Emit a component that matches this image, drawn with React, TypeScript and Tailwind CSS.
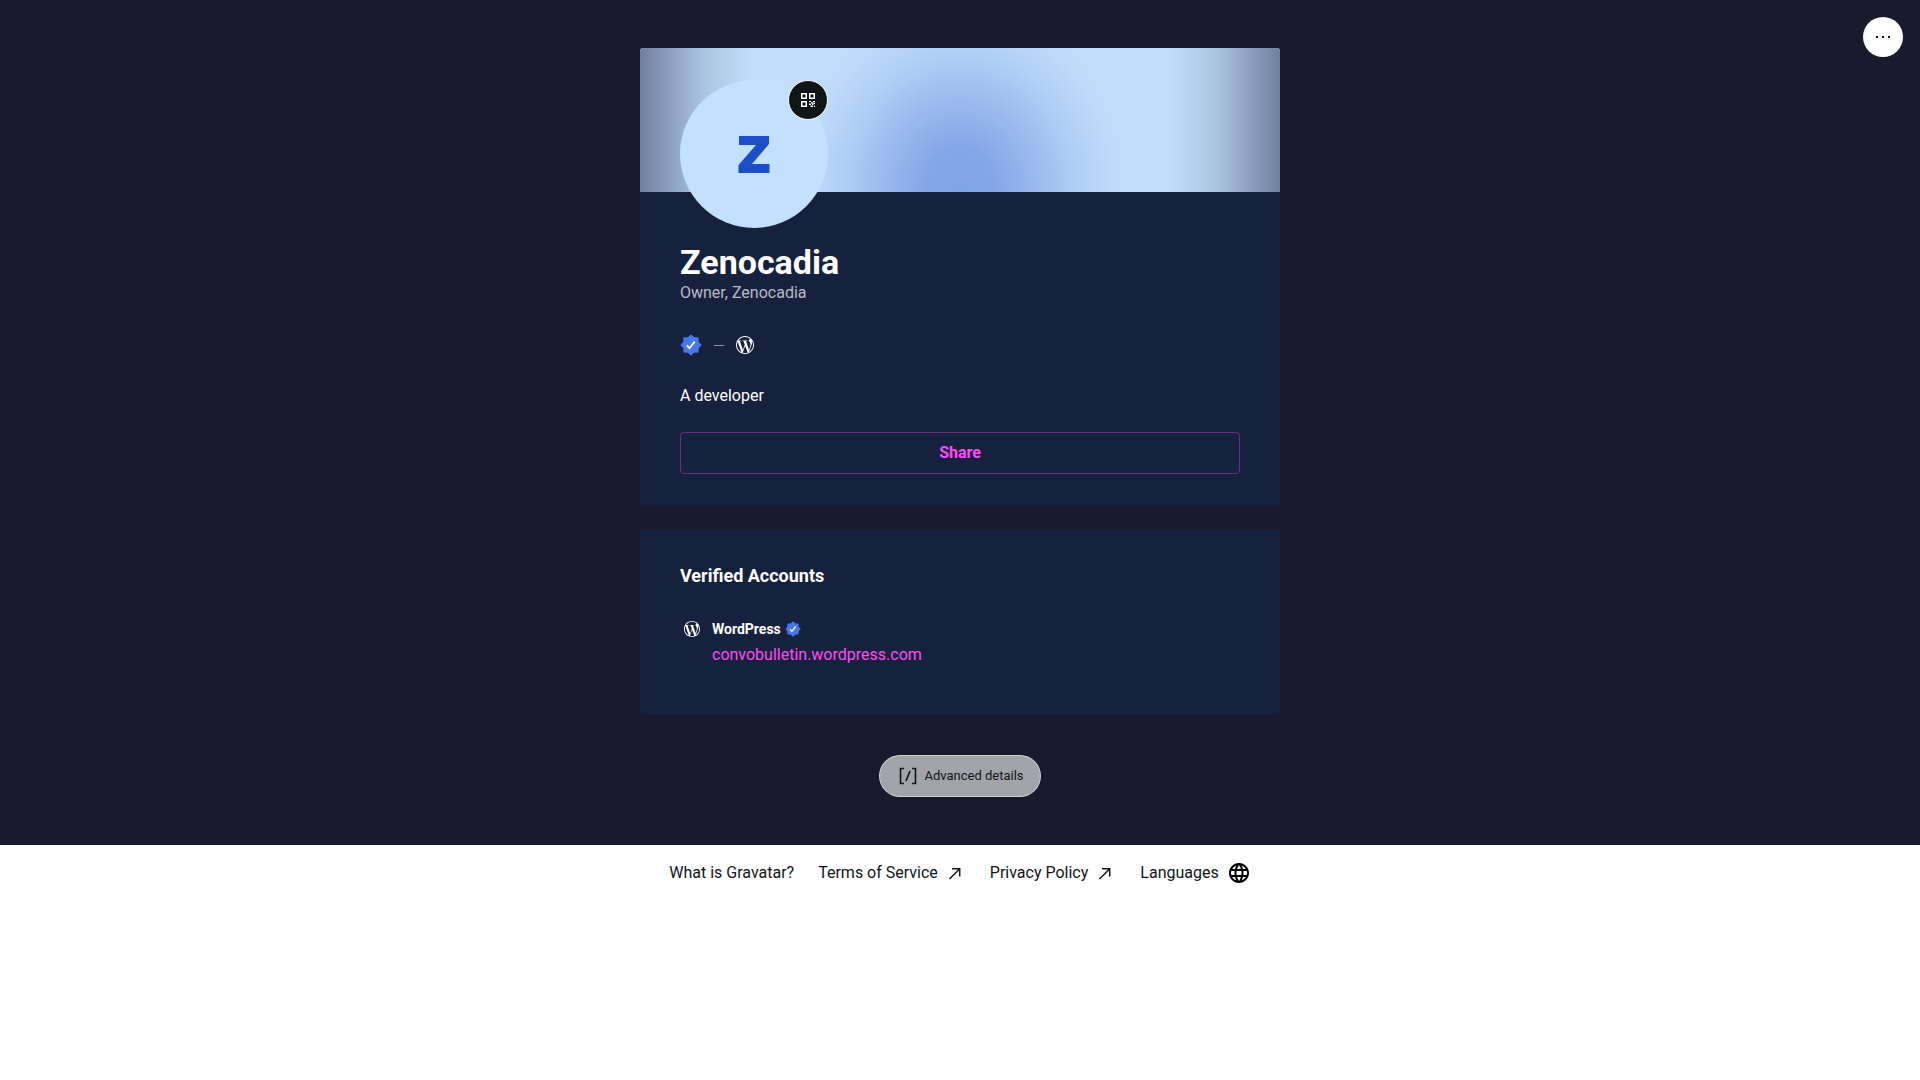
import type { ReactNode } from "react";
import { MdLanguage } from "react-icons/md";
import { SiWordpress } from "react-icons/si";

const footerLinks = [
  { label: "What is Gravatar?", external: false },
  { label: "Terms of Service", external: true },
  { label: "Privacy Policy", external: true },
];

function VerifiedBadge({ className }: { className: string }) {
  return (
    <svg viewBox="0 0 20 20" className={className} aria-label="Verified">
      <g fill="#4678eb">
        <rect x="3" y="3" width="14" height="14" rx="1" />
        <rect x="3" y="3" width="14" height="14" rx="1" transform="rotate(45 10 10)" />
      </g>
      <path d="M6.2 10.4l2.4 2.5 4.8-6" fill="none" stroke="#fff" strokeWidth="1.6" />
    </svg>
  );
}

function QrIcon() {
  return (
    <svg viewBox="0 0 14 14" className="size-3.5" fill="#fff">
      <path
        fillRule="evenodd"
        d="M0 0h6v6H0zM1.5 1.5v3h3v-3zM8 0h6v6H8zM9.5 1.5v3h3v-3zM0 8h6v6H0zM1.5 9.5v3h3v-3z"
      />
      <path d="M8 8h2v1H8zM10 9h1.500v1.500H10zM12 8h2v1.500h-2zM8 10.500h2V12H8zM11 10.500h1.500V12H11zM12.500 10H14v1h-1.500zM9.500 12.500H12V14H9.500zM13 12.500h1V14h-1z" />
    </svg>
  );
}

function ExternalArrow() {
  return (
    <svg viewBox="0 0 20 20" className="size-5" fill="none" stroke="currentColor" strokeWidth="1.5">
      <path d="M3.5 16L13.5 6M6 5.8h7.700v7.700" />
    </svg>
  );
}

function Card({ children }: { children: ReactNode }) {
  return <section className="overflow-hidden rounded bg-[#16213e]">{children}</section>;
}

export default function App() {
  return (
    <div className="font-[Roboto,sans-serif] text-base text-white">
      <div className="relative bg-[#1a1a2e] px-4 py-12">
        <button
          aria-label="More options"
          className="absolute top-[17px] right-[17px] flex size-10 items-center justify-center gap-1 rounded-full bg-white"
        >
          <span className="size-0.5 bg-[#101517]" />
          <span className="size-0.5 bg-[#101517]" />
          <span className="size-0.5 bg-[#101517]" />
        </button>

        <main className="mx-auto flex max-w-[640px] flex-col gap-6">
          {/* Profile */}
          <Card>
            <div className="h-36 bg-[#c3dffb] bg-[linear-gradient(90deg,#6f819f_0%,#9bb0cf_7%,#abc5e0_10%,#c3dffb00_18%,#c3dffb00_82%,#abc5e0_90%,#9bb0cf_93%,#6f819f_100%),radial-gradient(ellipse_190px_215px_at_50%_96%,#7fa5e6_0%,#85a6e6_18%,#98b8ed_38%,#b0cff6_62%,#bedcfa_82%,#c3dffb_100%)] px-10 pt-8">
              <div className="relative flex size-[148px] items-center justify-center rounded-full bg-[#c4e0ff]">
                <svg viewBox="0 0 32 38" className="h-[38px] w-8" fill="#1c4fc6" aria-label="Zenocadia logo">
                  <path d="M1 1h30v8L14 29h17.500v9H0.500v-8L18 10H1z" />
                </svg>
                <button
                  aria-label="Show QR code"
                  className="absolute top-0 right-0 flex size-10 items-center justify-center rounded-full border border-white bg-[#101517]"
                >
                  <QrIcon />
                </button>
              </div>
            </div>

            <div className="px-10 pt-[51px] pb-8">
              <h1 className="text-[34px] leading-[38px] font-bold">Zenocadia</h1>
              <p className="text-[#b9bcc5]">Owner, Zenocadia</p>

              <div className="mt-7 flex h-6 items-center gap-3">
                <VerifiedBadge className="size-[22px]" />
                <span className="h-px w-2.5 bg-white/50" />
                <a href="#wordpress" aria-label="WordPress">
                  <SiWordpress className="size-[18px]" />
                </a>
              </div>

              <p className="mt-[27px]">A developer</p>

              <button className="mt-6 h-[42px] w-full rounded border border-[#ff4bf8]/35 font-bold text-[#ff4bf8]">
                Share
              </button>
            </div>
          </Card>

          {/* Verified accounts */}
          <Card>
            <div className="px-10 pt-[34px] pb-12">
              <h2 className="text-lg leading-6 font-bold">Verified Accounts</h2>

              <div id="wordpress" className="mt-[29px] flex gap-2">
                <SiWordpress className="m-1 size-4" />
                <div>
                  <div className="flex h-6 items-center gap-1 text-sm font-bold">
                    WordPress
                    <VerifiedBadge className="size-4" />
                  </div>
                  <a href="#convobulletin" className="mt-0.5 block text-[#ff4bf8]">
                    convobulletin.wordpress.com
                  </a>
                </div>
              </div>
            </div>
          </Card>
        </main>

        <button className="mx-auto mt-10 flex h-[42px] items-center gap-1 rounded-full border border-white/50 bg-white/60 px-4 text-[13px] text-[#101517]">
          <svg viewBox="0 0 24 24" className="size-6" fill="none" stroke="currentColor" strokeWidth="1.6">
            <path d="M8 4.500H4.500v15H8M16 4.500h3.500v15H16M14 7l-4 10" />
          </svg>
          Advanced details
        </button>
      </div>

      <footer className="flex flex-wrap items-center justify-center gap-6 bg-white p-4 text-[#101517]">
        {footerLinks.map((link) => (
          <a key={link.label} href="#footer" className="flex items-center gap-2">
            {link.label}
            {link.external && <ExternalArrow />}
          </a>
        ))}
        <button className="flex items-center gap-2">
          Languages
          <MdLanguage className="size-6 text-black" />
        </button>
      </footer>
    </div>
  );
}
